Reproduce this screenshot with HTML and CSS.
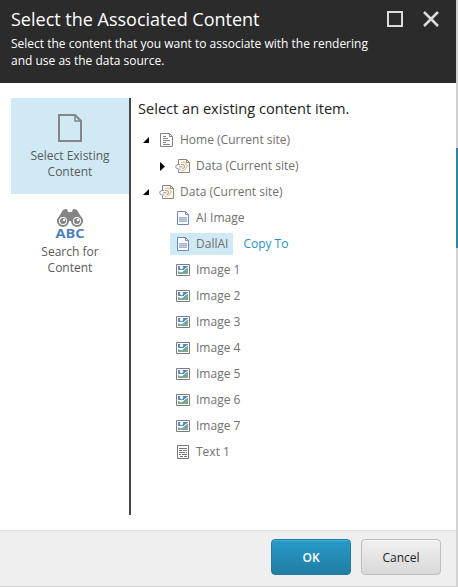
FILE: index.html
```html
<!DOCTYPE html>
<html lang="en">
<head>
<meta charset="utf-8">
<title>Select the Associated Content</title>
<link rel="stylesheet" href="styles.css">
</head>
<body>
<svg class="defs" aria-hidden="true">
  <symbol id="page" viewBox="0 0 16 16"><path d="M1.500 1.500h9l3 3v10h-12z M10.500 1.500v3h3" fill="#fff" stroke="#858585"/><path d="M4 4.500h3M4 6.500h5M4 8.500h7M4 10.500h3M4 12.500h7" stroke="#858585"/></symbol>
  <symbol id="data" viewBox="0 0 16 16"><path d="M3.500 6V1.500h8l3 3v10h-11V12" fill="#fff" stroke="#858585"/><path d="M11.500 1.500v3h3" fill="none" stroke="#858585"/><path d="M6 5l3-1.200 3.500 4-3 4-3.500 1" fill="none" stroke="#f5c67c" stroke-width="1.300"/><path d="M5 6.500H3a2 2 0 0 0 0 4.500H5.500M6 6.500h1.500a2 2 0 0 1 0 4M4 8.800h3.500" fill="none" stroke="#919191"/></symbol>
  <symbol id="doc" viewBox="0 0 16 16"><path d="M2.500 1.500h8l3 3v10h-11z" fill="#fff" stroke="#7189b8"/><path d="M10.500 1.500v3h3" fill="none" stroke="#7189b8"/><path d="M4 7h8v5H4z" fill="#c0cce4"/><path d="M4 7.500h8M4 9.500h8M4 11.500h8" stroke="#a5b5d7"/></symbol>
  <symbol id="image" viewBox="0 0 16 16"><path d="M1.500 2.500h13v11h-13z" fill="#fff" stroke="#7c7c7c"/><path d="M3 4h10v4H3z" fill="#4a86c5"/><path d="M3 9l3 1 2-1 5-4v7H3z" fill="#79aa91"/><path d="M3 8l3 2 2-1 2-2 3-2" fill="none" stroke="#fff"/><circle cx="6.500" cy="5.500" r="1.700" fill="#fff"/></symbol>
  <symbol id="text" viewBox="0 0 16 16"><path d="M2.500 1.500h11v13h-11z" fill="#fff" stroke="#777"/><path d="M4 4.500h8M4 6.500h3M8 6.500h4M4 8.500h6M11 8.500h1M4 10.500h2M7 10.500h5M5 12.500h3M9 12.500h3" stroke="#777"/></symbol>
  <symbol id="open" viewBox="0 0 6 6"><path d="M6 0v6H0z"/></symbol>
  <symbol id="closed" viewBox="0 0 5 9"><path d="M0 0l5 4.500L0 9z"/></symbol>
</svg>
<div class="dialog">
  <header class="header">
    <div class="heading">
      <h1>Select the Associated Content</h1>
      <p>Select the content that you want to associate with the rendering<br>and use as the data source.</p>
    </div>
    <svg class="controls" width="54" height="20" viewBox="0 0 54 20" fill="none" stroke="#dcdcdc" stroke-width="2"><path d="M2 3h14v14H2z"/><path d="M38 3l14 14M52 3L38 17" stroke-width="2.500"/></svg>
  </header>
  <main class="main">
    <nav class="modes">
      <a class="mode selected">
        <svg width="24" height="28" viewBox="0 0 24 28" fill="none" stroke="#858585" stroke-width="2"><path d="M1 1h16l6 6v20H1z"/><path d="M17 1v6h6" stroke-width="1.500"/></svg>
        <span>Select Existing<br>Content</span>
      </a>
      <a class="mode">
        <svg width="30" height="30" viewBox="0 0 30 30"><path d="M2 11L8 1q1-1 4-1l1 3h4l1-3q3 0 4 1l6 10-5 6-6-5h-4l-6 5z" fill="#858585"/><circle cx="8" cy="12" r="5" fill="#fff" stroke="#858585" stroke-width="2"/><circle cx="22" cy="12" r="5" fill="#fff" stroke="#858585" stroke-width="2"/><circle cx="8" cy="12" r="3" fill="#858585"/><circle cx="22" cy="12" r="3" fill="#858585"/><circle cx="9" cy="11" r="1.200" fill="#fff"/><circle cx="23" cy="11" r="1.200" fill="#fff"/><text class="abc" x="0.500" y="29" textLength="29" lengthAdjust="spacingAndGlyphs">ABC</text></svg>
        <span>Search for<br>Content</span>
      </a>
    </nav>
    <section class="content">
      <h2>Select an existing content item.</h2>
      <ul class="tree">
        <li class="row root"><svg class="open"><use href="#open"/></svg><span class="node"><svg class="icon"><use href="#page"/></svg>Home (Current site)</span></li>
        <li class="row"><svg class="closed"><use href="#closed"/></svg><span class="node"><svg class="icon"><use href="#data"/></svg>Data (Current site)</span></li>
        <li class="row root"><svg class="open"><use href="#open"/></svg><span class="node"><svg class="icon"><use href="#data"/></svg>Data (Current site)</span></li>
        <li class="row leaf"><span class="node"><svg class="icon"><use href="#doc"/></svg>AI Image</span></li>
        <li class="row leaf"><span class="node active"><svg class="icon"><use href="#doc"/></svg>DallAI</span><a class="copy">Copy To</a></li>
        <li class="row leaf"><span class="node"><svg class="icon"><use href="#image"/></svg>Image 1</span></li>
        <li class="row leaf"><span class="node"><svg class="icon"><use href="#image"/></svg>Image 2</span></li>
        <li class="row leaf"><span class="node"><svg class="icon"><use href="#image"/></svg>Image 3</span></li>
        <li class="row leaf"><span class="node"><svg class="icon"><use href="#image"/></svg>Image 4</span></li>
        <li class="row leaf"><span class="node"><svg class="icon"><use href="#image"/></svg>Image 5</span></li>
        <li class="row leaf"><span class="node"><svg class="icon"><use href="#image"/></svg>Image 6</span></li>
        <li class="row leaf"><span class="node"><svg class="icon"><use href="#image"/></svg>Image 7</span></li>
        <li class="row leaf"><span class="node"><svg class="icon"><use href="#text"/></svg>Text 1</span></li>
      </ul>
    </section>
  </main>
  <footer class="footer">
    <button class="button primary">OK</button>
    <button class="button">Cancel</button>
  </footer>
</div>
</body>
</html>
```
FILE: styles.css
```css
* { box-sizing: border-box; }
body {
  margin: 0;
  height: 587px;
  overflow: hidden;
  font: 12px/16px "Open Sans", sans-serif;
  color: #707070;
  background: linear-gradient(#d0d0d0 0 148px, #3181ad 148px 248px, #d3d3d3 248px);
}
h1, h2, p, ul { margin: 0; padding: 0; font-weight: 400; }
.defs { display: none; }
.dialog { width: 456px; height: 586px; display: flex; flex-direction: column; background: #fff; }
.header { height: 83px; flex: none; display: flex; justify-content: space-between; padding: 7px 16px 0 11px; background: #2b2b2b; color: #fff; }
h1 { font-size: 18px; line-height: 25px; white-space: nowrap; }
.header p { margin-top: 3px; line-height: 17px; white-space: nowrap; }
.controls { margin-top: 2px; flex: none; }
.main { flex: 1; display: flex; align-items: flex-start; padding: 15px 0 0 11px; }
.modes { width: 120px; height: 417px; border-right: 2px solid #474747; color: #5a5a5a; }
.mode { height: 96px; display: flex; flex-direction: column; align-items: center; padding-top: 16px; text-align: center; }
.mode svg { flex: none; margin-bottom: 6px; }
.mode:not(.selected) { padding-top: 15px; }
.mode:not(.selected) svg { margin-bottom: 5px; overflow: visible; }
.selected { background: #d0eaf5; }
.abc { font: 700 13px/13px "Open Sans", sans-serif; fill: #4c80bd; }
.content { padding-left: 7px; }
h2 { font-size: 14.6px; line-height: 20px; color: #222; }
.tree { list-style: none; padding-top: 9px; }
.row { height: 26px; display: flex; align-items: center; padding-left: 22px; }
.root { padding-left: 5px; }
.leaf { padding-left: 32px; }
.open { width: 6px; height: 6px; margin: 0 5px 0 0; }
.closed { width: 5px; height: 9px; margin-right: 5px; }
.node { height: 22px; display: flex; align-items: center; gap: 5px; padding: 0 5px; }
.icon { width: 16px; height: 16px; }
.active { background: #d0eaf5; }
.copy { margin-left: 10px; color: #2694c0; }
.footer { height: 56px; flex: none; display: flex; justify-content: flex-end; gap: 10px; padding: 8px 15px 0 0; background: #efefef; border-top: 1px solid #dedede; box-shadow: 0 1px #d0d0d0; }
.button { width: 80px; height: 36px; padding: 0; border: 1px solid #bdbdbd; border-radius: 4px; font: 12px "Open Sans", sans-serif; color: #222; background: linear-gradient(#f0f0f0, #d9d9d9); box-shadow: inset 0 1px #f7f7f7; }
.primary { border-color: #1e7ba1; color: #fff; font-weight: 600; background: linear-gradient(#289bc8, #207da3); box-shadow: inset 0 1px #4baed3; }
```
